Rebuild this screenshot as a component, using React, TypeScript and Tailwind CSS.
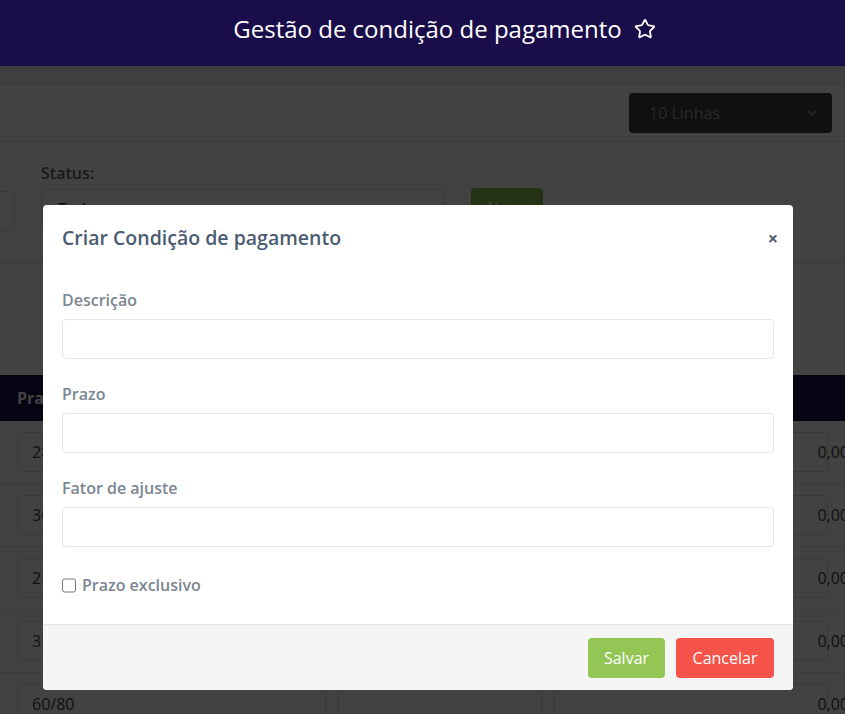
import { ChevronDown, Star } from "lucide-react";

const ROWS = ["28", "30", "21", "35", "60/80"];

function Field({ label }: { label: string }) {
  return (
    <div className="mb-[23px]">
      <label className="mb-[7px] block text-[16px] font-semibold leading-6 text-[#7b8691]">{label}</label>
      <input className="block h-10 w-full rounded-[4px] border border-[#e6e6e6] bg-white px-3 text-[15px] outline-none" />
    </div>
  );
}

export default function App() {
  return (
    <div className="relative h-[714px] overflow-hidden bg-white font-['Open_Sans',sans-serif]">
      <header className="relative z-20 flex h-[66px] items-center justify-center bg-[#190e4a] pb-[9px] pl-[44px] text-white">
        <h1 className="text-[24px] font-normal leading-none">Gestão de condição de pagamento</h1>
        <Star className="ml-3 h-[22px] w-[22px]" strokeWidth={2} />
      </header>

      {/* page behind the modal */}
      <div className="h-[19px] border-b border-[#dcdcdc] bg-[#f4f4f4]" />
      <div className="flex h-[57px] items-center justify-end border-b border-[#dcdcdc] pr-[13px]">
        <div className="flex h-10 w-[203px] items-center justify-between rounded-[4px] bg-[#3b3f45] pl-5 pr-3 text-[16px] text-[#9aa0a6]">
          10 Linhas
          <ChevronDown className="h-4 w-4" />
        </div>
      </div>
      <div className="flex h-[121px] items-start gap-[26px] border-b border-[#dcdcdc] pt-[19px]">
        <div className="-ml-[390px] w-[405px]">
          <div className="mb-[6px] text-[16px] leading-6 text-transparent">.</div>
          <div className="h-10 rounded-[4px] border border-[#e0e0e0]" />
        </div>
        <div className="w-[404px]">
          <div className="mb-[4px] text-[16px] font-semibold leading-6 text-[#666]">Status:</div>
          <div className="flex h-10 items-center rounded-[4px] border border-[#e0e0e0] px-4 text-[16px] text-[#333]">Todos</div>
        </div>
        <div className="mt-[27px] flex h-10 w-[72px] items-center justify-center rounded-[4px] bg-[#8fc552] text-[16px] text-white">Novo</div>
      </div>
      <div className="h-[112px]" />
      <div className="flex h-[46px] items-center bg-[#180d4a] pl-[17px] text-[16px] font-bold text-white">Prazo</div>
      <div>
        {ROWS.map((r) => (
          <div key={r} className="flex h-[63px] items-center gap-[12px] border-b border-[#e8e8e8] px-[17px]">
            <div className="flex h-10 w-[309px] items-center rounded-[4px] border border-[#e0e0e0] px-[14px] text-[16px] text-[#444]">{r}</div>
            <div className="h-10 w-[204px] rounded-[4px] border border-[#e0e0e0]" />
            <div className="flex h-10 flex-1 items-center justify-end rounded-[4px] border border-[#e0e0e0] text-[16px] text-[#444]">
              <span className="-mr-[22px]">0,00</span>
            </div>
          </div>
        ))}
      </div>

      {/* backdrop */}
      <div className="absolute inset-x-0 bottom-0 top-[66px] z-10 bg-black/[0.74]" />

      {/* modal */}
      <div className="absolute left-[43px] top-[205px] z-30 w-[750px] overflow-hidden rounded-[4px] bg-white">
        <div className="flex h-[66px] items-center justify-between px-[19px]">
          <h2 className="text-[19.5px] font-semibold leading-none text-[#4a5c72]">Criar Condição de pagamento</h2>
          <span className="mr-[-4px] text-[18px] font-bold leading-none text-[#4a5c72]">×</span>
        </div>
        <div className="px-[19px] pb-[30px] pt-[17px]">
          <Field label="Descrição" />
          <Field label="Prazo" />
          <Field label="Fator de ajuste" />
          <label className="flex items-center gap-[6px] pt-[3px] text-[16px] font-semibold leading-6 text-[#7b8691]">
            <input type="checkbox" className="h-[15px] w-[14px]" />
            Prazo exclusivo
          </label>
        </div>
        <div className="-mt-[3px] flex h-[66px] items-center justify-end gap-[11px] border-t border-[#e5e5e5] bg-[#f5f5f5] pr-[19px]">
          <button className="h-10 w-[77px] rounded-[4px] bg-[#93c655] text-[16px] text-white">Salvar</button>
          <button className="h-10 w-[98px] rounded-[4px] bg-[#f6534a] text-[16px] text-white">Cancelar</button>
        </div>
      </div>
    </div>
  );
}
